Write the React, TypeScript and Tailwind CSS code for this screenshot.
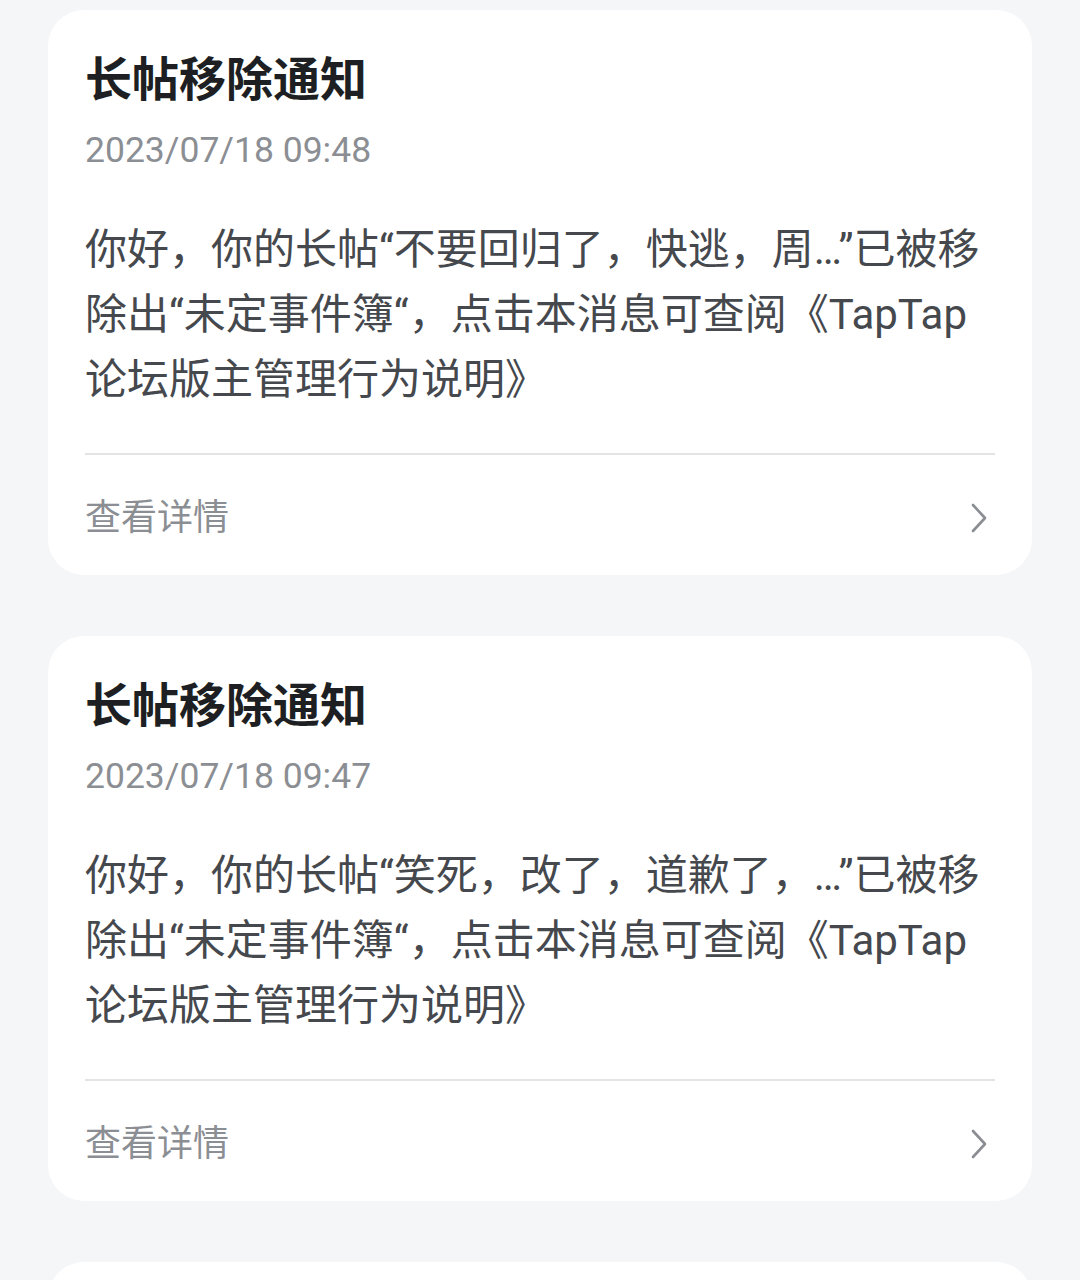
const notices = [
  {
    title: '长帖移除通知',
    time: '2023/07/18 09:48',
    body: '你好，你的长帖“不要回归了，快逃，周…”已被移除出“未定事件簿“，点击本消息可查阅《TapTap论坛版主管理行为说明》',
  },
  {
    title: '长帖移除通知',
    time: '2023/07/18 09:47',
    body: '你好，你的长帖“笑死，改了，道歉了，…”已被移除出“未定事件簿“，点击本消息可查阅《TapTap论坛版主管理行为说明》',
  },
]

function Chevron() {
  return (
    <svg width="20" height="32" viewBox="0 0 20 32" fill="none">
      <path d="M4 3 L16 16 L4 29" stroke="#8a8d92" strokeWidth="2.6" strokeLinecap="round" strokeLinejoin="round" />
    </svg>
  )
}

function NoticeCard({ title, time, body }: { title: string; time: string; body: string }) {
  return (
    <div className="bg-white rounded-[36px] px-[37px] pt-[42px]">
      <h3 className="text-[47px] leading-[56px] font-semibold text-[#1d1f22]">{title}</h3>
      <div className="mt-[17px] text-[35.5px] leading-[50px] text-[#8b8e93]">{time}</div>
      <p className="mt-[42px] text-[42px] leading-[65px] text-[#45484d] break-all">{body}</p>
      <div className="mt-[41px] h-[2px] bg-[#e3e4e6]" />
      <div className="h-[120px] pt-[6px] flex items-center justify-between">
        <span className="text-[36px] text-[#8b8e93]">查看详情</span>
        <span className="mr-[6px]">
          <Chevron />
        </span>
      </div>
    </div>
  )
}

export default function App() {
  return (
    <div
      className="h-[1280px] bg-[#f5f6f8] px-[48px] pt-[10px] flex flex-col gap-[61px] overflow-hidden"
      style={{ fontFamily: 'Roboto, "Noto Sans CJK SC", sans-serif' }}
    >
      {notices.map((n, i) => (
        <NoticeCard key={i} {...n} />
      ))}
      <div className="bg-white rounded-[36px] h-[200px] shrink-0" />
    </div>
  )
}
